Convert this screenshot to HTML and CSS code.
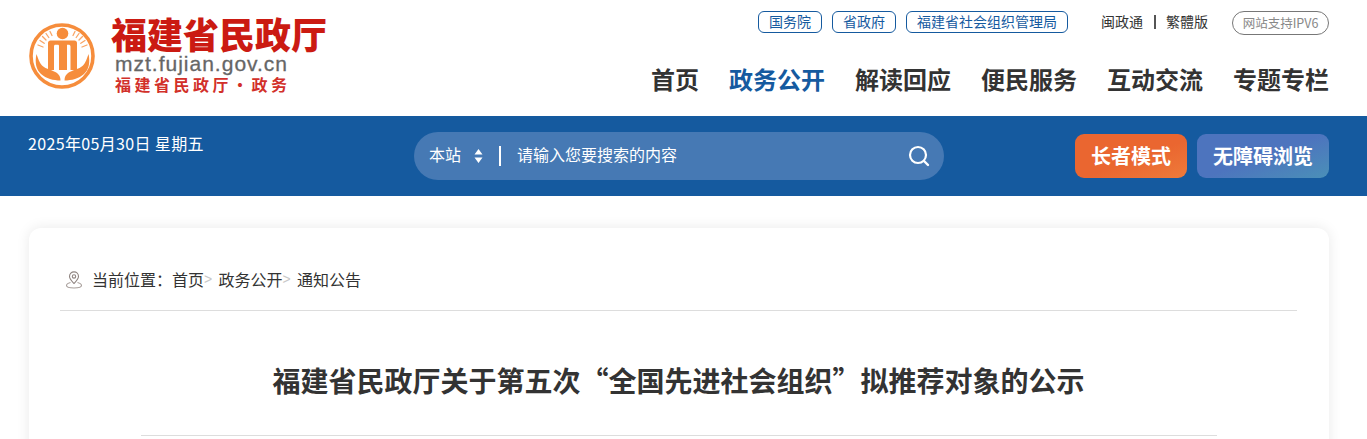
FILE: index.html
```html
<!DOCTYPE html>
<html lang="zh-CN">
<head>
<meta charset="utf-8">
<title>福建省民政厅关于第五次“全国先进社会组织”拟推荐对象的公示</title>
<link rel="stylesheet" href="styles.css">
</head>
<body>
<header class="top">
  <a class="brand" href="#">
    <svg class="emblem" viewBox="0 0 66 66" width="66" height="66" aria-hidden="true">
      <circle cx="33" cy="33" r="31" fill="#fff" stroke="#f68d3c" stroke-width="3.6"/>
      <circle cx="33.500" cy="10.500" r="5.800" fill="#f68d3c"/>
      <path fill-rule="evenodd" d="M21.500 17.500h24c1.500 0 2.500 1 2.500 2.500v27h-6.500V23.500c0-1.200-.8-1.800-2-1.800h-1.500V47h-8V23c0-.8-.5-1.300-1.300-1.300h-2.200c-1 0-1.500.6-1.500 1.800V47H19V20c0-1.500 1-2.500 2.500-2.500z" fill="#f68d3c"/>
      <g stroke="#f9a566" stroke-width="1.300" stroke-linecap="round">
        <path d="M21 8.500l2 4M17 10.500l2.800 4M13.500 13.500l3.500 3.500M11 17.500l4.200 2.800M9 22l5 2"/>
        <path d="M46 8.500l-2 4M50 10.500l-2.800 4M53.500 13.500l-3.500 3.500M56 17.500l-4.200 2.800M58 22l-5 2"/>
      </g>
      <path d="M7.500 31c1.500 4.500 3 9 5.500 11.500 4 4 11 4.500 15 7.500 2.200 1.700 3.500 4 3.500 7.500-7 0-14.500-2-19.500-6.500-4.500-4-6.500-11-4.500-20z" fill="#f68d3c"/>
      <path d="M59.500 31c-1.500 4.500-3 9-5.500 11.500-4 4-11 4.500-15 7.500-2.200 1.700-3.500 4-3.500 7.500 7 0 14.500-2 19.500-6.500 4.500-4 6.500-11 4.500-20z" fill="#f68d3c"/>
    </svg>
    <span class="brand-text">
      <span class="brand-name">福建省民政厅</span>
      <span class="brand-url">mzt.fujian.gov.cn</span>
      <span class="brand-sub">福建省民政厅·政务</span>
    </span>
  </a>
  <div class="top-right">
    <div class="links">
      <a class="chip" href="#">国务院</a>
      <a class="chip" href="#">省政府</a>
      <a class="chip" href="#">福建省社会组织管理局</a>
      <a class="plain plain-first" href="#">闽政通</a>
      <i class="sep"></i>
      <a class="plain" href="#">繁體版</a>
      <span class="ipv6">网站支持IPV6</span>
    </div>
    <nav class="nav">
      <a href="#">首页</a>
      <a class="active" href="#">政务公开</a>
      <a href="#">解读回应</a>
      <a href="#">便民服务</a>
      <a href="#">互动交流</a>
      <a href="#">专题专栏</a>
    </nav>
  </div>
</header>

<section class="band">
  <div class="date">2025年05月30日 星期五</div>
  <form class="search">
    <span class="scope">本站</span>
    <svg class="updown" viewBox="0 0 9 14" width="9" height="14" aria-hidden="true">
      <path d="M4.500 0l4 5.500H.5zM4.500 14L.5 8.500h8z" fill="#fff"/>
    </svg>
    <i class="search-bar"></i>
    <span class="placeholder">请输入您要搜索的内容</span>
    <svg class="magnifier" viewBox="0 0 22 22" width="22" height="22" aria-hidden="true">
      <circle cx="10" cy="10" r="8" fill="none" stroke="#fff" stroke-width="2.200"/>
      <path d="M16 16l4 4" stroke="#fff" stroke-width="2.400" stroke-linecap="round"/>
    </svg>
  </form>
  <div class="modes">
    <a class="mode mode-elder" href="#">长者模式</a>
    <a class="mode mode-access" href="#">无障碍浏览</a>
  </div>
</section>

<main class="card">
  <div class="crumbs">
    <svg class="pin" viewBox="0 0 18 18" width="18" height="18" aria-hidden="true">
      <path d="M9 12.500C6.500 9.800 4.500 7.800 4.500 5.400a4.500 4.500 0 0 1 9 0c0 2.400-2 4.400-4.500 7.100z" fill="none" stroke="#8f8480" stroke-width="1.100"/>
      <circle cx="9" cy="5.400" r="1.700" fill="none" stroke="#8f8480" stroke-width="1.100"/>
      <path d="M5.500 11.500C3 12.200 1.500 13.200 1.500 14.500c0 1.500 3 2.500 7.500 2.500s7.500-1 7.500-2.500c0-1.300-1.500-2.300-4-3" fill="none" stroke="#a89f9b" stroke-width="1.100"/>
    </svg>
    <span class="crumb-label">当前位置：</span>
    <a href="#">首页</a><span class="gt">&gt;</span>
    <a href="#">政务公开</a><span class="gt">&gt;</span>
    <a href="#">通知公告</a>
  </div>
  <h1 class="title">福建省民政厅关于第五次“全国先进社会组织”拟推荐对象的公示</h1>
  <div class="title-rule"></div>
</main>
</body>
</html>
```

FILE: styles.css
```css
* { box-sizing: border-box; }
html, body { margin: 0; height: 439px; overflow: hidden; background: #fff; }
body { font-family: "Noto Sans CJK SC", "Liberation Sans", sans-serif; color: #333; }
a { color: inherit; text-decoration: none; }
i { display: block; }

.top { height: 116px; display: flex; justify-content: space-between; padding: 0 38px 0 29px; }
.brand { display: flex; align-items: flex-start; }
.emblem { margin-top: 23px; flex: none; }
.brand-text { display: flex; flex-direction: column; margin-left: 16px; padding-top: 13px; }
.brand-name { font-family: "Noto Sans CJK SC", sans-serif; font-weight: 900; font-size: 36px; line-height: 40px; color: #cb1a12; width: 216px; white-space: nowrap; }
.brand-url { font-family: "Liberation Sans", sans-serif; font-size: 21px; line-height: 20px; letter-spacing: 1px; color: #666; margin: 1px 0 0 4px; -webkit-text-stroke: .3px #666; }
.brand-sub { font-weight: 700; font-size: 16px; line-height: 20px; letter-spacing: 3.500px; color: #d2302a; margin: 0 0 0 4px; white-space: nowrap; }

.top-right { display: flex; flex-direction: column; align-items: flex-end; }
.links { display: flex; align-items: center; margin-top: 11px; height: 24px; font-size: 14px; }
.chip { display: flex; align-items: center; height: 22px; padding: 0 10px 2px; margin-right: 10px; border: 1px solid #155a9f; border-radius: 6px; color: #155a9f; margin-top: -2px; }
.chip:nth-child(3) { margin-right: 0; }
.plain { color: #333; margin-top: -4px; line-height: 22px; }
.plain-first { margin-left: 33px; }
.sep { width: 2px; height: 14px; margin: -2px 10px 0 11px; background: #555; }
.ipv6 { display: flex; align-items: center; justify-content: center; width: 97px; height: 24px; margin-left: 24px; padding-bottom: 2px; border: 1px solid #777; border-radius: 12px; font-size: 12.500px; color: #888; }
.nav { display: flex; gap: 30px; margin-top: 26px; font-size: 24px; font-weight: 700; line-height: 36px; color: #333; }
.nav .active { color: #155a9f; }

.band { height: 80px; background: #155a9f; display: grid; grid-template-columns: 385px 530px 1fr; align-items: center; padding: 0 38px 0 29px; color: #fff; }
.date { font-size: 16px; line-height: 24px; align-self: start; padding-top: 15px; white-space: nowrap; margin-left: -1px; letter-spacing: .35px; }
.search { display: flex; align-items: center; height: 48px; padding: 0 14px 0 15px; border-radius: 24px; background: #4679b4; font-size: 16px; }
.scope, .placeholder { margin-bottom: 4px; }
.updown { margin-left: 13px; }
.search-bar { width: 2px; height: 20px; margin: 0 16px 0 16px; background: #fff; }
.placeholder { flex: 1; }
.magnifier { flex: none; }
.modes { display: flex; justify-content: flex-end; gap: 10px; }
.mode { display: flex; align-items: center; justify-content: center; height: 44px; padding-bottom: 2px; border-radius: 9px; font-size: 20px; font-weight: 700; color: #fff; }
.mode-elder { width: 112px; background: linear-gradient(160deg, #ea6630 55%, #ee7b3a 100%); }
.mode-access { width: 132px; background: linear-gradient(160deg, #4d74be 50%, #4a90b8 100%); }

.card { width: 1300px; height: 260px; margin: 32px 0 0 29px; padding: 0 32px 0 31px; border-radius: 12px; background: #fff; box-shadow: 0 0 14px rgba(0, 0, 0, .09); }
.crumbs { display: flex; align-items: center; height: 83px; padding: 19px 0 0 5px; border-bottom: 1px solid #ddd; font-size: 16px; color: #333; white-space: nowrap; }
.pin { margin-right: 9px; margin-top: 2px; }
.gt { color: #c8c8c8; font-size: 14px; width: 14.500px; font-family: "Liberation Sans", sans-serif; }
.title { margin: 45px 0 0; text-align: center; font-size: 28px; font-weight: 700; line-height: 48px; color: #333; }
.title-rule { height: 1px; margin: 31px 80px 0 81px; background: #ddd; }
```
